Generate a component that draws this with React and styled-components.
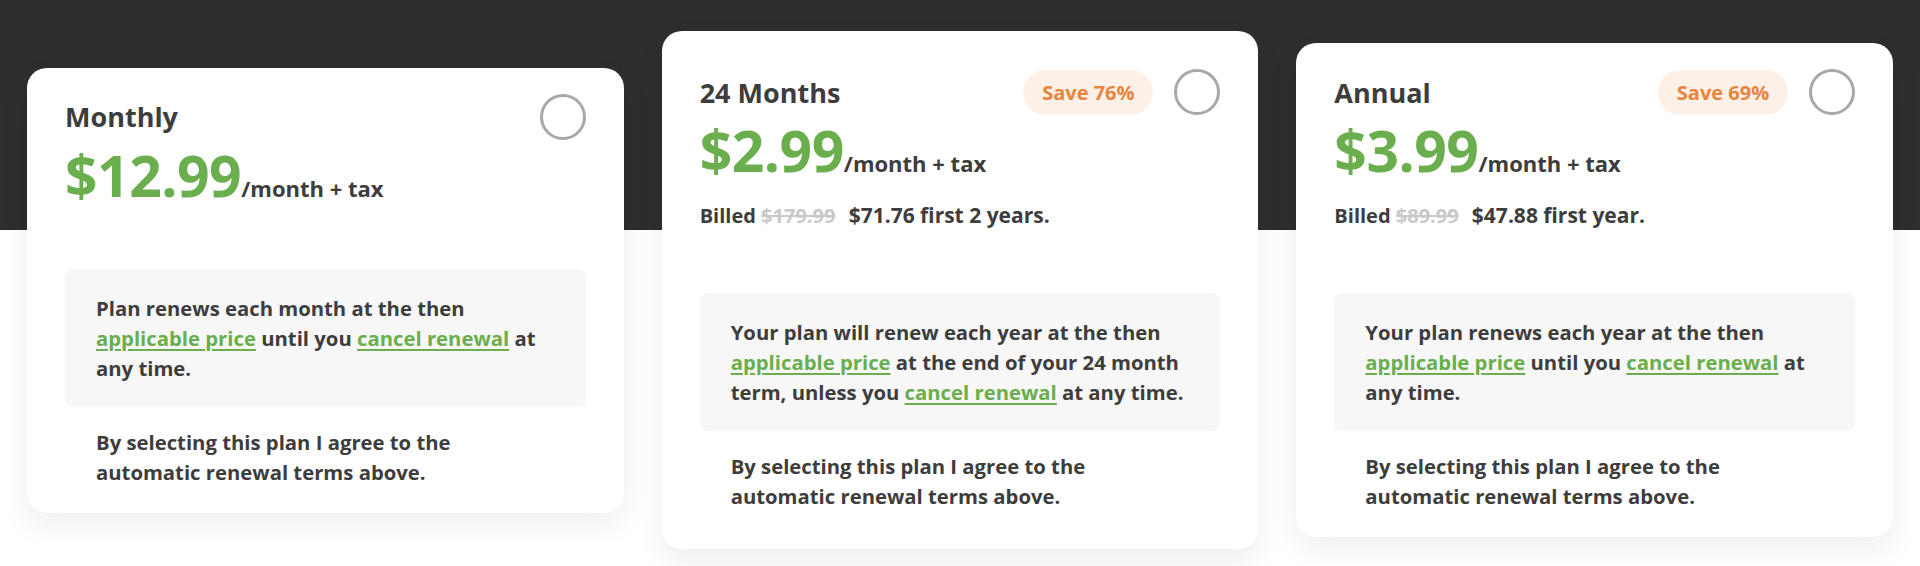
import React from 'react'
import styled, { createGlobalStyle } from 'styled-components'

const GlobalStyle = createGlobalStyle`
  html, body {
    margin: 0;
    padding: 0;
    background: #ffffff;
  }
  body {
    font-family: "Open Sans", "Liberation Sans", sans-serif;
    color: #3d3d3d;
  }
`

const Page = styled.div`
  height: 566px;
  background: linear-gradient(to bottom, #2e2e2e 0, #2e2e2e 230px, #ffffff 230px);
  overflow: hidden;
`

const Row = styled.div`
  display: flex;
  align-items: center;
  gap: 38px;
  height: 100%;
  box-sizing: border-box;
  padding: 14px 27px 0;
`

const Card = styled.div`
  flex: 1;
  box-sizing: border-box;
  background: #ffffff;
  border-radius: 20px;
  padding: ${p => (p.$featured ? '38px' : '26px')} 38px;
  box-shadow: 0 12px 30px rgba(0, 0, 0, 0.07);
  display: flex;
  flex-direction: column;
`

const Header = styled.div`
  display: flex;
  align-items: center;
  height: 46px;
`

const Title = styled.h3`
  margin: 0;
  flex: 1;
  font-size: 27px;
  font-weight: 700;
  color: #3d3d3d;
`

const Badge = styled.span`
  display: inline-flex;
  align-items: center;
  justify-content: center;
  height: 45px;
  width: 130px;
  border-radius: 23px;
  background: #fdf1e7;
  color: #e8843c;
  font-size: 20px;
  font-weight: 700;
  margin-right: 21px;
`

const Radio = styled.span`
  width: 46px;
  height: 46px;
  box-sizing: border-box;
  border: 3px solid #a8a8a8;
  border-radius: 50%;
  background: #fff;
`

const PriceRow = styled.div`
  margin-top: 4px;
  line-height: 62px;
  height: 62px;
  white-space: nowrap;
`

const Price = styled.span`
  font-size: 57px;
  font-weight: 700;
  color: #6aae4e;
  letter-spacing: -0.5px;
`

const Per = styled.span`
  font-size: 22px;
  font-weight: 700;
  color: #3d3d3d;
`

const Billed = styled.div`
  margin-top: 19px;
  font-size: 20px;
  line-height: 30px;
  font-weight: 700;
  color: #3d3d3d;
`

const Struck = styled.s`
  color: #c9c9c9;
  margin-right: 8px;
`

const NewPrice = styled.span`
  font-size: 21px;
`

const TermsBox = styled.div`
  margin-top: ${p => (p.$afterBilled ? '62px' : '63px')};
  background: #f7f7f7;
  border-radius: 8px;
  padding: 24px 31px;
  font-size: 20.3px;
  line-height: 30px;
  font-weight: 700;
`

const TermLink = styled.a`
  color: #6aae4e;
  text-decoration: underline;
  text-underline-offset: 3px;
  text-decoration-thickness: 2px;
`

const Agree = styled.p`
  margin: 20px 0 0;
  padding: 0 31px;
  max-width: 400px;
  font-size: 20.3px;
  line-height: 30px;
  font-weight: 700;
`

const plans = [
  {
    name: 'Monthly',
    price: '$12.99',
    terms: (
      <>
        Plan renews each month at the then <TermLink>applicable price</TermLink> until you{' '}
        <TermLink>cancel renewal</TermLink> at any time.
      </>
    ),
  },
  {
    name: '24 Months',
    save: 'Save 76%',
    price: '$2.99',
    was: '$179.99',
    billed: '$71.76 first 2 years.',
    featured: true,
    terms: (
      <>
        Your plan will renew each year at the then <TermLink>applicable price</TermLink> at the end of
        your 24 month term, unless you <TermLink>cancel renewal</TermLink> at any time.
      </>
    ),
  },
  {
    name: 'Annual',
    save: 'Save 69%',
    price: '$3.99',
    was: '$89.99',
    billed: '$47.88 first year.',
    terms: (
      <>
        Your plan renews each year at the then <TermLink>applicable price</TermLink> until you{' '}
        <TermLink>cancel renewal</TermLink> at any time.
      </>
    ),
  },
]

const App = () => {
  return (
    <Page>
      <GlobalStyle />
      <Row>
        {plans.map(plan => (
          <Card key={plan.name} $featured={plan.featured}>
            <Header>
              <Title>{plan.name}</Title>
              {plan.save && <Badge>{plan.save}</Badge>}
              <Radio />
            </Header>
            <PriceRow>
              <Price>{plan.price}</Price>
              <Per>/month + tax</Per>
            </PriceRow>
            {plan.billed && (
              <Billed>
                Billed <Struck>{plan.was}</Struck> <NewPrice>{plan.billed}</NewPrice>
              </Billed>
            )}
            <TermsBox $afterBilled={!!plan.billed}>{plan.terms}</TermsBox>
            <Agree>By selecting this plan I agree to the automatic renewal terms above.</Agree>
          </Card>
        ))}
      </Row>
    </Page>
  )
}

export default App
